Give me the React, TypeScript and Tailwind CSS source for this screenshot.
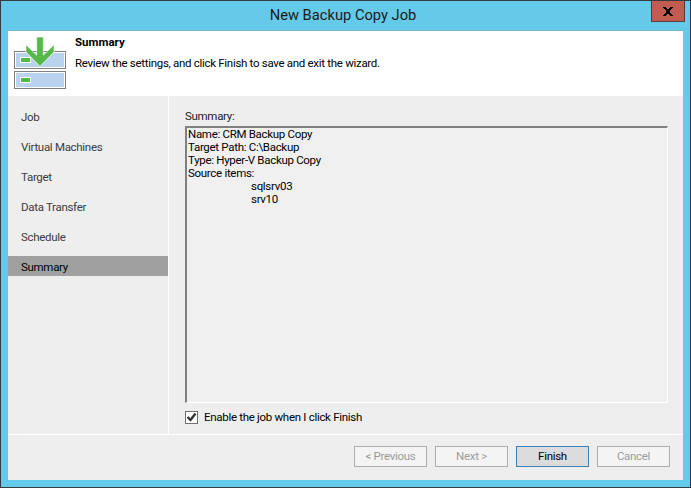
const font = "font-['Roboto','Liberation_Sans',Arial,sans-serif]";

const steps = ["Job", "Virtual Machines", "Target", "Data Transfer", "Schedule", "Summary"];

function HeaderIcon() {
  return (
    <svg width="54" height="54" viewBox="0 0 54 54" className="shrink-0">
      <g shapeRendering="crispEdges">
        <rect x="0.5" y="14.5" width="51" height="17" fill="#b9d3ee" stroke="#808080" />
        <rect x="1.5" y="15.5" width="49" height="15" fill="none" stroke="#ffffff" />
        <rect x="0.5" y="34.5" width="51" height="17" fill="#b9d3ee" stroke="#808080" />
        <rect x="1.5" y="35.5" width="49" height="15" fill="none" stroke="#ffffff" />
        <rect x="6.5" y="20.5" width="10" height="5" fill="#55b947" stroke="#ffffff" />
        <rect x="6.5" y="40.5" width="10" height="5" fill="#55b947" stroke="#ffffff" />
      </g>
      <path
        d="M22.7 0h6.6v18.3L40 7.7V15L26 29.3 12 15V7.7l10.7 10.6z"
        fill="#55b947"
        stroke="#ffffff"
        strokeWidth="0.6"
      />
    </svg>
  );
}

function WizardButton({ label, primary }: { label: string; primary?: boolean }) {
  return (
    <button
      className={
        primary
          ? "h-[21px] w-[73px] border border-[#3b80b8] bg-[#dcdcdc] text-[11.5px] tracking-[-0.3px] text-black"
          : "h-[21px] w-[73px] border border-[#adadad] bg-[#f4f4f4] text-[11.5px] tracking-[-0.3px] text-[#9c9c9c]"
      }
    >
      {label}
    </button>
  );
}

export default function App() {
  return (
    <div className={`${font} flex h-[488px] w-[691px] flex-col border border-[#333b40] bg-[#65caea] text-[11.5px] tracking-[-0.3px] text-black`}>
      {/* Title bar */}
      <div className="flex h-[29px] shrink-0 items-start">
        <div className="flex h-[29px] flex-1 items-center justify-center pl-[34px] text-[14.7px] leading-none tracking-normal text-[#1a1a1a]">
          New Backup Copy Job
        </div>
        <div className="mr-[5px] flex h-[21px] w-[34px] items-center justify-center border border-t-0 border-[#5a3a38] bg-[#c35c50]">
          <svg width="10" height="9" viewBox="0 0 10 9" shapeRendering="crispEdges">
            <path d="M0 0h3v1h1v1h2V1h1V0h3v1H9v1H8v1H7v3h1v1h1v1h1v1H7V8H6V7H4v1H3v1H0V8h1V7h1V6h1V3H2V2H1V1H0z" fill="#000" />
          </svg>
        </div>
      </div>

      {/* Dialog body */}
      <div className="mx-[7px] flex h-[450px] flex-col border-t border-[#7fb4cc] bg-[#eeeeee]">
        <div className="flex h-[65px] shrink-0 bg-white pl-[6px] pt-[6px]">
          <HeaderIcon />
          <div className="ml-[7px]">
            <div className="mt-[-2px] text-[11.5px] font-bold leading-[15px] tracking-normal">Summary</div>
            <div className="mt-[6px] leading-[15px]">Review the settings, and click Finish to save and exit the wizard.</div>
          </div>
        </div>

        <div className="flex h-[338px] shrink-0">
          <div className="flex w-[161px] shrink-0 flex-col gap-[10px] border-r border-white pt-[10px]">
            {steps.map((step) => (
              <div
                key={step}
                className={`flex h-[20px] items-center pl-[13px] pt-[3px] ${step === "Summary" ? "bg-[#a0a0a0] text-black" : "text-[#3c3c3c]"}`}
              >
                {step}
              </div>
            ))}
          </div>

          <div className="flex min-w-0 flex-1 flex-col pl-[16px] pr-[15px] pt-[13px]">
            <div className="leading-[15px] text-[#222]">Summary:</div>
            <div className="mt-[2px] h-[277px] border-2 border-b border-r border-[#808080] border-b-white border-r-white bg-[#f0f0f0] pl-[1px] leading-[13px]">
              <div>Name: CRM Backup Copy</div>
              <div>Target Path: C:\Backup</div>
              <div>Type: Hyper-V Backup Copy</div>
              <div>Source items:</div>
              <div className="pl-[63px]">sqlsrv03</div>
              <div className="pl-[63px]">srv10</div>
            </div>
            <div className="mt-[7px] flex items-center gap-[6px]">
              <div className="flex h-[13px] w-[13px] items-center justify-center border border-[#707070] bg-white">
                <svg width="11" height="11" viewBox="0 0 11 11">
                  <path d="M1.5 5l3 3 5-6.5" fill="none" stroke="#333" strokeWidth="2.4" />
                </svg>
              </div>
              <span className="leading-[15px]">Enable the job when I click Finish</span>
            </div>
          </div>
        </div>

        <div className="flex flex-1 items-start justify-end gap-[8px] border-t border-white pr-[13px] pt-[11px]">
          <WizardButton label="< Previous" />
          <WizardButton label="Next >" />
          <WizardButton label="Finish" primary />
          <WizardButton label="Cancel" />
        </div>
      </div>
    </div>
  );
}
